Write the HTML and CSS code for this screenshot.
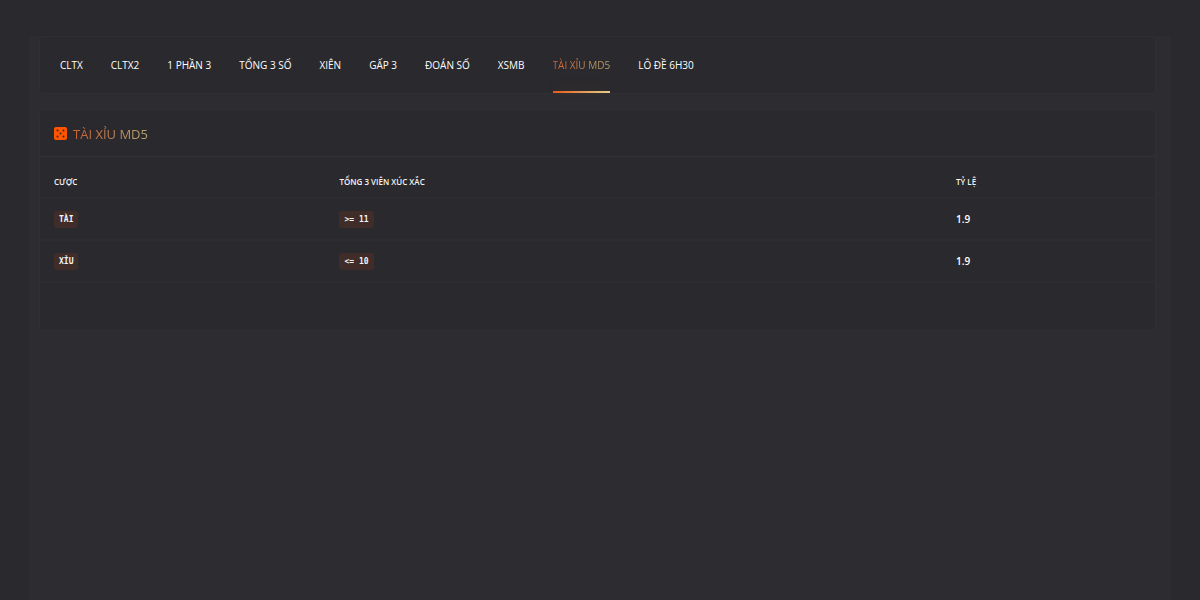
FILE: index.html
```html
<!DOCTYPE html>
<html lang="vi">
<head>
<meta charset="utf-8">
<title>Tài xỉu MD5</title>
<link rel="stylesheet" href="styles.css">
</head>
<body>
<main class="panel">
  <nav class="card tabs">
    <a class="tab" href="#">CLTX</a>
    <a class="tab" href="#">CLTX2</a>
    <a class="tab" href="#">1 PHẦN 3</a>
    <a class="tab" href="#">TỔNG 3 SỐ</a>
    <a class="tab" href="#">XIÊN</a>
    <a class="tab" href="#">GẤP 3</a>
    <a class="tab" href="#">ĐOÁN SỐ</a>
    <a class="tab" href="#">XSMB</a>
    <a class="tab tab-active" href="#" aria-current="page"><span class="gradient-text">TÀI XỈU MD5</span></a>
    <a class="tab" href="#">LÔ ĐỀ 6H30</a>
  </nav>
  <section class="card game">
    <header class="game-head">
      <svg class="dice" viewBox="0 0 13 13" aria-hidden="true">
        <rect width="13" height="13" rx="2" fill="#ff5500"/>
        <g fill="#2a292d">
          <circle cx="3.5" cy="3.5" r="1"/><circle cx="9.5" cy="3.5" r="1"/>
          <circle cx="6.5" cy="6.5" r="1"/>
          <circle cx="3.5" cy="9.5" r="1"/><circle cx="9.5" cy="9.5" r="1"/>
        </g>
      </svg>
      <h1 class="game-title gradient-text">TÀI XỈU MD5</h1>
    </header>
    <table class="odds">
      <colgroup><col class="col-bet"><col class="col-sum"><col class="col-rate"></colgroup>
      <thead>
        <tr><th>CƯỢC</th><th>TỔNG 3 VIÊN XÚC XẮC</th><th>TỶ LỆ</th></tr>
      </thead>
      <tbody>
        <tr><td><code class="chip">TÀI</code></td><td><code class="chip">&gt;= 11</code></td><td>1.9</td></tr>
        <tr><td><code class="chip">XỈU</code></td><td><code class="chip">&lt;= 10</code></td><td>1.9</td></tr>
      </tbody>
    </table>
  </section>
</main>
</body>
</html>
```
FILE: styles.css
```css
* { box-sizing: border-box; }
body {
  margin: 0;
  min-height: 100vh;
  display: flex;
  padding: 36px 29px 0;
  background: #2a292d;
  color: #f4f4f4;
  font-family: "Open Sans", "Noto Sans", sans-serif;
  font-size: 10px;
}
.panel {
  flex: 1;
  display: flex;
  flex-direction: column;
  gap: 15px;
  padding: 0 15px 0 10px;
  background: #2d2c30;
}
.card {
  background: #2a292d;
  border: 1px solid #303034;
  border-radius: 5px;
}
.tabs {
  display: flex;
  gap: 28px;
  padding: 0 20px;
}
.tab {
  position: relative;
  color: #ffffff;
  line-height: 56px;
  text-decoration: none;
  white-space: nowrap;
}
.tab-active::after {
  content: "";
  position: absolute;
  left: 0;
  right: 0;
  bottom: 0;
  height: 2px;
  background: linear-gradient(90deg, #e85a18, #e3cf8c);
  box-shadow: 0 -4px 12px rgba(227, 160, 80, 0.1);
}
.gradient-text {
  background: linear-gradient(90deg, #d06030, #b5a874);
  background-clip: text;
  color: transparent;
}
.game { padding-bottom: 47px; }
.game-head {
  display: flex;
  align-items: center;
  gap: 6px;
  height: 47px;
  padding: 1px 14px 0;
  border-bottom: 1px solid #333236;
}
.dice {
  width: 13px;
  height: 13px;
}
.game-title {
  margin: 0;
  font-size: 13px;
  font-weight: 400;
  line-height: 20px;
}
.odds {
  width: 100%;
  table-layout: fixed;
  border-collapse: collapse;
}
.col-bet { width: 25.6%; }
.col-sum { width: 55.3%; }
.odds th,
.odds td {
  height: 42px;
  padding: 0 14px;
  border-bottom: 2px solid #2d2c30;
  text-align: left;
  vertical-align: middle;
}
.odds th {
  height: 41px;
  padding-top: 9px;
  font-size: 8px;
  font-weight: 600;
}
.odds td {
  color: #ffffff;
  font-weight: 600;
}
.chip {
  display: inline-block;
  padding: 0 5px;
  border-radius: 3px;
  background: #402d2a;
  color: #f4f4f4;
  font-family: "DejaVu Sans Mono", monospace;
  font-size: 8px;
  font-weight: 700;
  line-height: 17px;
  vertical-align: middle;
}
```
